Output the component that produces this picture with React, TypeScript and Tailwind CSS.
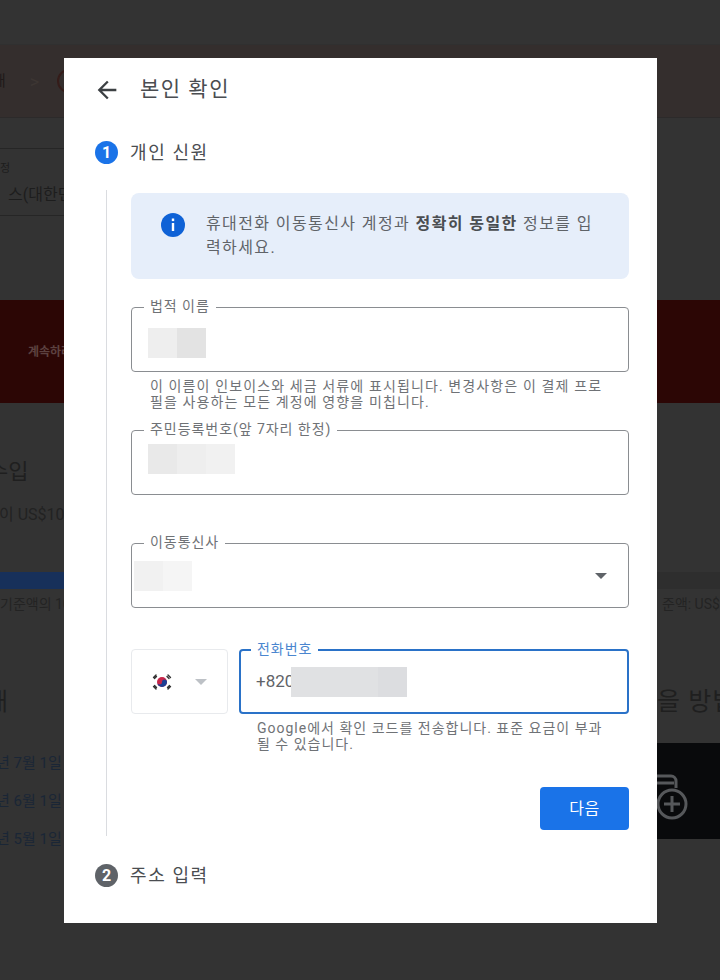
const font = "font-['Roboto','Noto_Sans_CJK_KR',sans-serif]";

const Tile = ({ className }: { className: string }) => <div className={"h-[30px] " + className} />;

const Field = ({ label, className, children }: { label: string; className?: string; children?: React.ReactNode }) => (
  <div className={"relative h-[65px] rounded-[4px] border border-[#8a8d91] flex " + (className ?? "")}>
    <span className="absolute -top-[11px] left-[12px] bg-white px-[6px] text-[14px] leading-[18px] tracking-[0.95px] text-[#6f7276] whitespace-nowrap">
      {label}
    </span>
    {children}
  </div>
);

const Caret = ({ className }: { className: string }) => (
  <div className={"h-0 w-0 border-x-[6px] border-t-[6px] border-x-transparent " + className} />
);

const StepBadge = ({ n, className }: { n: string; className: string }) => (
  <div className={"flex h-[23px] w-[23px] items-center justify-center rounded-full text-[16px] font-bold text-white " + className}>
    {n}
  </div>
);

const Flag = () => (
  <svg width="22" height="18" viewBox="0 0 22 18">
    <circle cx="11" cy="9" r="5" fill="#c8264a" />
    <path d="M6 9a5 5 0 0 0 10 0 2.5 2.5 0 0 0-5 0 2.5 2.5 0 0 1-5 0z" fill="#1c3f94" />
    <g stroke="#333" strokeWidth="1.4" strokeLinecap="round" fill="none">
      <path d="M2.5 4.5l2.5-2.5M3.5 5.5l2-2" />
      <path d="M17 2l2.5 2.5M16 3.5l2 2" />
      <path d="M2.5 13.5l2.5 2.5M3.5 12.5l2 2" />
      <path d="M19.5 13.5l-2.5 2.5M18.5 12.5l-2 2" />
    </g>
  </svg>
);

const Backdrop = () => (
  <div className="flex h-full flex-col bg-[#333333] text-[#1f1f1f]">
    <div className="h-[45px] border-b border-[#303030]" />
    <div className="flex h-[73px] items-center justify-between border-b border-[#2c2a2a] bg-[#342e2d]">
      <div className="flex w-[64px] items-center overflow-hidden">
        <span className="-ml-[8px] text-[15px] text-[#1f1a1a]">개</span>
        <span className="ml-[24px] text-[18px] text-[#3d3633]">&gt;</span>
        <div className="ml-[18px] h-[24px] w-[24px] shrink-0 rounded-full border-2 border-[#351c19]" />
      </div>
    </div>
    <div className="h-[30px]" />
    <div className="h-[68px] w-[64px] overflow-hidden border-y border-[#262626] text-[#1d1d1d]">
      <div className="pt-[12px] text-[11px] leading-[16px]">정</div>
      <div className="ml-[8px] whitespace-nowrap pt-[8px] text-[16px] leading-[20px]">스(대한민국)</div>
    </div>
    <div className="h-[84px]" />
    <div className="flex h-[103px] items-center overflow-hidden bg-[#2c0605]">
      <span className="ml-[28px] whitespace-nowrap text-[12px] font-bold text-[#5c4140]">계속하려면</span>
    </div>
    <div className="h-[169px] w-[64px] overflow-hidden whitespace-nowrap">
      <div className="-ml-[12px] pt-[54px] text-[22px] leading-[30px]">수입</div>
      <div className="-ml-[1px] pt-[18px] text-[16px] leading-[20px] text-[#222222]">이 US$10</div>
    </div>
    <div className="flex h-[17px] justify-between bg-[#2e2e2e]">
      <div className="w-[64px] bg-[#17305a]" />
    </div>
    <div className="flex h-[30px] items-center justify-between overflow-hidden whitespace-nowrap bg-[#333333] text-[14px] text-[#232323]">
      <span className="w-[64px] overflow-hidden">기준액의 10</span>
      <span className="w-[63px] overflow-hidden pl-[5px]">준액: US$</span>
    </div>
    <div className="flex flex-1 justify-between">
      <div className="w-[64px] overflow-hidden whitespace-nowrap">
        <div className="-ml-[14px] pt-[66px] text-[24px] leading-[34px]">내</div>
        <div className="flex flex-col gap-[20px] pt-[35px] text-[15px] leading-[18px] text-[#1a2636]">
          <span className="-ml-[4px]">년 7월 1일</span>
          <span className="-ml-[4px]">년 6월 1일</span>
          <span className="-ml-[4px]">년 5월 1일</span>
        </div>
      </div>
      <div className="w-[63px] overflow-hidden whitespace-nowrap">
        <div className="pt-[66px] text-[25px] leading-[34px] tracking-[1px]">을 방법</div>
        <div className="mt-[24px] h-[96px] bg-[#090a0c] text-[#56585b]">
          <svg width="40" height="96" viewBox="0 0 40 96" fill="none" stroke="currentColor" strokeWidth="3">
            <path d="M0 33h14a5 5 0 0 1 5 5v7" />
            <path d="M0 40h17" />
            <circle cx="15" cy="61" r="14" />
            <path d="M15 53v16M7 61h16" />
          </svg>
        </div>
      </div>
    </div>
  </div>
);

export default function App() {
  return (
    <div className={"relative h-[980px] w-[720px] overflow-hidden " + font}>
      <Backdrop />

      <div className="absolute left-[64px] top-[58px] h-[865px] w-[593px] bg-white pl-[31px] pt-[18px] text-[#5f6368]">
        <div className="flex h-[28px] items-center">
          <svg className="-ml-[2px]" width="28" height="28" viewBox="0 0 24 24" fill="#3c4043">
            <path d="M20 11H7.83l5.59-5.59L12 4l-8 8 8 8 1.41-1.41L7.83 13H20v-2z" />
          </svg>
          <h1 className="ml-[19px] text-[21px] tracking-[1.5px] text-[#4a4d51]">본인 확인</h1>
        </div>

        <div className="mt-[37px] flex h-[23px] items-center">
          <StepBadge n="1" className="bg-[#1a73e8]" />
          <span className="ml-[12px] text-[18px] tracking-[1.6px] text-[#4a4d51]">개인 신원</span>
        </div>

        <div className="ml-[11px] mt-[26px] flex h-[646px] w-[523px] flex-col border-l border-[#dadce0] pl-[24px]">
          <div className="mt-[3px] flex h-[86px] shrink-0 rounded-[8px] bg-[#e6eefa] pl-[30px] pt-[19px]">
            <svg className="mt-px shrink-0" width="24" height="24" viewBox="0 0 24 24">
              <circle cx="12" cy="12" r="12" fill="#0f62d6" />
              <rect x="10.8" y="5.5" width="2.4" height="2.6" fill="#fff" />
              <rect x="10.8" y="10" width="2.4" height="8" fill="#fff" />
            </svg>
            <p className="ml-[21px] text-[16px] leading-[24px] tracking-[1.4px] whitespace-nowrap">
              휴대전화 이동통신사 계정과 <b className="font-bold text-[#4a4d51]">정확히 동일한</b> 정보를 입
              <br />
              력하세요.
            </p>
          </div>

          <Field label="법적 이름" className="mt-[28px] shrink-0 items-start pl-[16px] pt-[20px]">
            <Tile className="w-[29px] bg-[#eeeeee]" />
            <Tile className="w-[29px] bg-[#e3e3e3]" />
          </Field>
          <p className="ml-[19px] mt-[6px] h-[32px] text-[14px] leading-[16px] tracking-[1.12px] whitespace-nowrap text-[#6f7276]">
            이 이름이 인보이스와 세금 서류에 표시됩니다. 변경사항은 이 결제 프로
            <br />
            필을 사용하는 모든 계정에 영향을 미칩니다.
          </p>

          <Field label="주민등록번호(앞 7자리 한정)" className="mt-[20px] shrink-0 items-start pl-[16px] pt-[13px]">
            <Tile className="w-[29px] bg-[#e9e9e9]" />
            <Tile className="w-[29px] bg-[#eeeeee]" />
            <Tile className="w-[29px] bg-[#f1f1f1]" />
          </Field>

          <Field label="이동통신사" className="mt-[48px] shrink-0 items-center pl-[2px]">
            <Tile className="mt-[1px] w-[29px] bg-[#f1f1f1]" />
            <Tile className="mt-[1px] w-[29px] bg-[#f5f5f5]" />
            <Caret className="ml-auto mr-[21px] border-t-[#5f6368]" />
          </Field>

          <div className="mt-[41px] flex h-[65px] shrink-0 gap-[11px]">
            <div className="flex w-[97px] items-center rounded-[4px] border border-[#e8eaed] pl-[19px]">
              <Flag />
              <Caret className="ml-[22px] border-t-[#bdc1c6]" />
            </div>
            <div className="relative flex w-[390px] items-center rounded-[4px] border-2 border-[#2a72c8] pl-[15px]">
              <span className="absolute -top-[11px] left-[10px] bg-white px-[6px] text-[14px] leading-[18px] tracking-[0.95px] text-[#4a86cf]">
                전화번호
              </span>
              <span className="w-[35px] overflow-hidden text-[17px] text-[#5f6368]">+820</span>
              <Tile className="w-[87px] bg-[#e0e1e3]" />
              <Tile className="w-[29px] bg-[#dcdde0]" />
            </div>
          </div>
          <p className="ml-[126px] mt-[6px] h-[32px] shrink-0 text-[14px] leading-[16px] tracking-[1px] whitespace-nowrap text-[#6f7276]">
            Google에서 확인 코드를 전송합니다. 표준 요금이 부과
            <br />
            될 수 있습니다.
          </p>

          <button className="mt-[35px] h-[43px] w-[89px] shrink-0 self-end rounded-[4px] bg-[#1a73e8] text-[16px] tracking-[0.5px] text-white">
            다음
          </button>
        </div>

        <div className="mt-[28px] flex h-[23px] items-center">
          <StepBadge n="2" className="bg-[#5f6368]" />
          <span className="ml-[12px] text-[18px] tracking-[1.6px] text-[#4a4d51]">주소 입력</span>
        </div>
      </div>
    </div>
  );
}
